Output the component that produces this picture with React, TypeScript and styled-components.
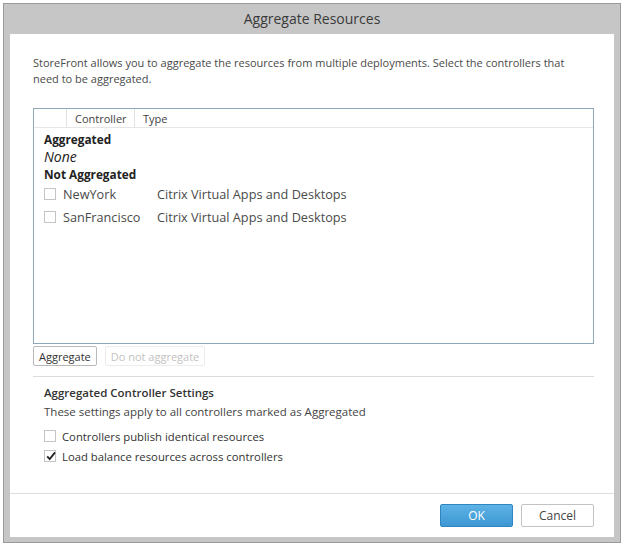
import React from 'react';
import styled, { createGlobalStyle } from 'styled-components';

const GlobalStyle = createGlobalStyle`
  html, body {
    margin: 0;
    padding: 0;
    background: #ffffff;
  }
  body {
    font-family: 'Open Sans', 'Noto Sans', sans-serif;
    color: #333;
  }
`;

const FONT = `'Open Sans', 'Noto Sans', sans-serif`;

const Page = styled.div`
  width: 623px;
  height: 546px;
  padding: 3px 2px 3px 3px;
  box-sizing: border-box;
`;

const Window = styled.div`
  height: 540px;
  background: #c6c6c6;
  border: 1px solid #9a9a9a;
  box-sizing: border-box;
  display: flex;
  flex-direction: column;
  padding: 0 6px 5px 6px;
`;

const TitleBar = styled.div`
  height: 29px;
  display: flex;
  align-items: center;
  justify-content: center;
  font-family: ${FONT};
  font-size: 14px;
  color: #3a3a3a;
  padding-bottom: 1px;
`;

const Body = styled.div`
  flex: 1;
  background: #fff;
  display: flex;
  flex-direction: column;
`;

const Content = styled.div`
  flex: 1;
  padding: 21px 20px 0 23px;
  display: flex;
  flex-direction: column;
`;

const Intro = styled.p`
  margin: 0;
  font-family: ${FONT};
  font-size: 11px;
  line-height: 16px;
  color: #4a4a4a;
  white-space: nowrap;
`;

const ListBox = styled.div`
  margin-top: 21px;
  height: 236px;
  border: 1px solid #8ea8bb;
  box-sizing: border-box;
  display: flex;
  flex-direction: column;
`;

const HeaderRow = styled.div`
  display: flex;
  height: 18px;
  border-bottom: 1px solid #e6e6e6;
`;

const HeaderCell = styled.div<{ $w?: number }>`
  width: ${({ $w }) => ($w ? `${$w}px` : 'auto')};
  flex: ${({ $w }) => ($w ? '0 0 auto' : '1')};
  border-right: ${({ $w }) => ($w ? '1px solid #e2e2e2' : 'none')};
  font-family: ${FONT};
  font-size: 11px;
  color: #444;
  display: flex;
  align-items: center;
  padding-left: 8px;
  box-sizing: border-box;
`;

const Groups = styled.div`
  padding: 3px 0 0 10px;
  display: flex;
  flex-direction: column;
`;

const GroupLabel = styled.div`
  font-family: ${FONT};
  font-size: 11.8px;
  font-weight: 700;
  color: #222;
  line-height: 16px;
`;

const EmptyText = styled.div`
  font-family: ${FONT};
  font-size: 14px;
  font-style: italic;
  color: #222;
  line-height: 19px;
`;

const ControllerRow = styled.div`
  display: flex;
  align-items: center;
  height: 23px;
  font-family: ${FONT};
  font-size: 12.7px;
  color: #4a4a4a;
`;

const Box = styled.span`
  width: 12px;
  height: 12px;
  border: 1px solid #c4c4c4;
  background: #fff;
  box-sizing: border-box;
  position: relative;
  flex: 0 0 auto;
`;

const Tick = styled.svg`
  position: absolute;
  left: 0;
  top: -1px;
`;

const NameCell = styled.span<{ $w: number }>`
  width: ${({ $w }) => $w}px;
  padding-left: 7px;
  flex: 0 0 auto;
`;

const Checkbox = ({ checked }: { checked?: boolean }) => (
  <Box>
    {checked && (
      <Tick width="12" height="12" viewBox="0 0 12 12">
        <path d="M2.2 6.3 L4.7 9 L10 2.4" fill="none" stroke="#222" strokeWidth="1.8" />
      </Tick>
    )}
  </Box>
);

const ButtonRow = styled.div`
  display: flex;
  gap: 8px;
  margin-top: 2px;
  padding-bottom: 10px;
  border-bottom: 1px solid #dcdcdc;
`;

const SmallButton = styled.button<{ $disabled?: boolean }>`
  height: 20px;
  padding: 0 5px;
  font-family: ${FONT};
  font-size: 11px;
  color: ${({ $disabled }) => ($disabled ? '#c2c2c2' : '#333')};
  background: #fff;
  border: 1px solid ${({ $disabled }) => ($disabled ? '#ececec' : '#b9b9b9')};
  border-radius: 2px;
  cursor: default;
`;

const Settings = styled.div`
  padding: 8px 0 0 11px;
  display: flex;
  flex-direction: column;
`;

const SettingsTitle = styled.div`
  font-family: ${FONT};
  font-size: 11.5px;
  font-weight: 600;
  color: #333;
  line-height: 16px;
`;

const SettingsNote = styled.div`
  margin-top: 3px;
  font-family: ${FONT};
  font-size: 11.5px;
  color: #444;
  line-height: 16px;
`;

const Options = styled.div`
  margin-top: 8px;
  display: flex;
  flex-direction: column;
  gap: 4px;
`;

const OptionRow = styled.label`
  display: flex;
  align-items: center;
  gap: 6px;
  height: 16px;
  font-family: ${FONT};
  font-size: 11.3px;
  color: #333;
`;

const Footer = styled.div`
  height: 44px;
  box-sizing: border-box;
  border-top: 1px solid #dedede;
  display: flex;
  align-items: center;
  justify-content: flex-end;
  gap: 8px;
  padding: 0 20px 0 0;
`;

const DialogButton = styled.button<{ $primary?: boolean }>`
  width: 73px;
  height: 23px;
  font-family: ${FONT};
  font-size: 12px;
  border-radius: 2px;
  cursor: default;
  color: ${({ $primary }) => ($primary ? '#fff' : '#444')};
  background: ${({ $primary }) =>
    $primary ? 'linear-gradient(#5eb3e6, #3c97d2)' : '#fff'};
  border: 1px solid ${({ $primary }) => ($primary ? '#2f86c0' : '#c3c3c3')};
`;

const controllers = [
  { name: 'NewYork', type: 'Citrix Virtual Apps and Desktops' },
  { name: 'SanFrancisco', type: 'Citrix Virtual Apps and Desktops' },
];

export default function App() {
  return (
    <>
      <GlobalStyle />
      <Page>
        <Window>
          <TitleBar>Aggregate Resources</TitleBar>
          <Body>
            <Content>
              <Intro>
                StoreFront allows you to aggregate the resources from multiple deployments. Select the controllers that
                <br />
                need to be aggregated.
              </Intro>
              <ListBox>
                <HeaderRow>
                  <HeaderCell $w={33} />
                  <HeaderCell $w={68}>Controller</HeaderCell>
                  <HeaderCell>Type</HeaderCell>
                </HeaderRow>
                <Groups>
                  <GroupLabel>Aggregated</GroupLabel>
                  <EmptyText>None</EmptyText>
                  <GroupLabel>Not Aggregated</GroupLabel>
                  {controllers.map((c) => (
                    <ControllerRow key={c.name}>
                      <Checkbox />
                      <NameCell $w={94}>{c.name}</NameCell>
                      <span>{c.type}</span>
                    </ControllerRow>
                  ))}
                </Groups>
              </ListBox>
              <ButtonRow>
                <SmallButton>Aggregate</SmallButton>
                <SmallButton $disabled>Do not aggregate</SmallButton>
              </ButtonRow>
              <Settings>
                <SettingsTitle>Aggregated Controller Settings</SettingsTitle>
                <SettingsNote>These settings apply to all controllers marked as Aggregated</SettingsNote>
                <Options>
                  <OptionRow>
                    <Checkbox />
                    Controllers publish identical resources
                  </OptionRow>
                  <OptionRow>
                    <Checkbox checked />
                    Load balance resources across controllers
                  </OptionRow>
                </Options>
              </Settings>
            </Content>
            <Footer>
              <DialogButton $primary>OK</DialogButton>
              <DialogButton>Cancel</DialogButton>
            </Footer>
          </Body>
        </Window>
      </Page>
    </>
  );
}
